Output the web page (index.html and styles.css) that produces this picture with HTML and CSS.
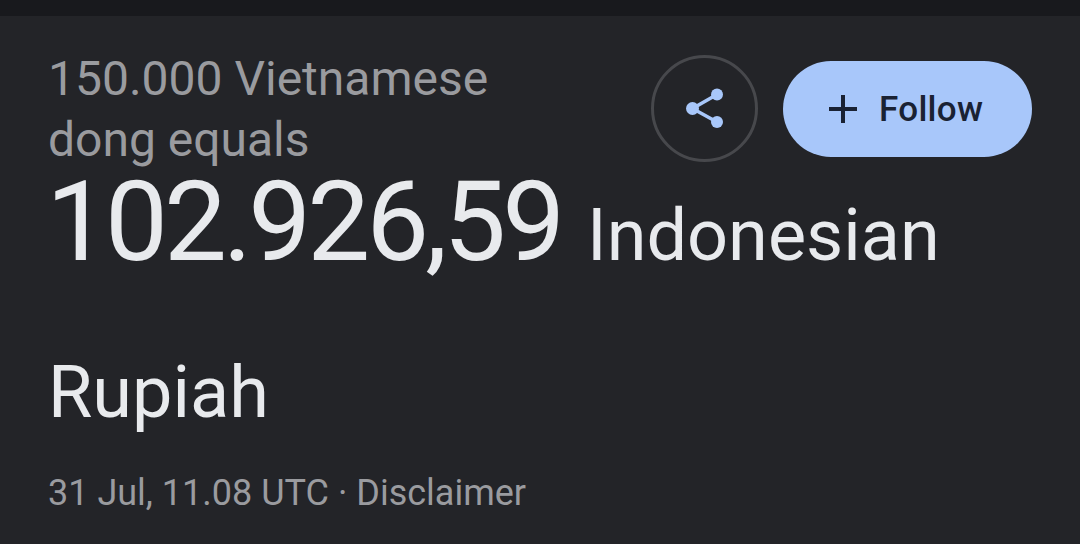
FILE: index.html
```html
<!DOCTYPE html>
<html lang="en">
<head>
    <meta charset="UTF-8">
    <title>currency</title>
    <link rel="stylesheet" href="styles.css">
</head>
<body>
    <div class="topbar"></div>
    <div class="card">
        <div class="head">
            <div class="from">150.000 Vietnamese<br>dong equals</div>
            <div class="actions">
                <div class="share">
                    <svg width="38" height="42" viewBox="0 0 38 42">
                        <path d="M31 7.5 L6.500 21.500 L31 35" fill="none" stroke="#a8c7fa" stroke-width="3.500"/>
                        <circle cx="31" cy="7.500" r="6" fill="#a8c7fa"/>
                        <circle cx="6.500" cy="21.500" r="6.500" fill="#a8c7fa"/>
                        <circle cx="31" cy="35" r="6" fill="#a8c7fa"/>
                    </svg>
                </div>
                <div class="follow">
                    <svg width="28" height="28" viewBox="0 0 28 28">
                        <path d="M14 0V28M0 14H28" stroke="#1a2233" stroke-width="4" fill="none"/>
                    </svg>
                    <span>Follow</span>
                </div>
            </div>
        </div>
        <div class="result"><span class="amount">102.926,59</span> <span class="unit">Indonesian Rupiah</span></div>
        <div class="meta">31 Jul, 11.08 UTC · Disclaimer</div>
    </div>
</body>
</html>
```
FILE: styles.css
```css
body {
    margin: 0;
    height: 544px;
    overflow: hidden;
    background-color: #232428;
    font-family: Roboto, sans-serif;
}

.topbar {
    height: 16px;
    background-color: #18191d;
}

.card {
    padding: 32px 48px 0 48px;
}

.head {
    display: flex;
    justify-content: space-between;
}

.from {
    color: #9a9b9f;
    font-size: 48px;
    line-height: 61px;
}

.actions {
    display: flex;
    align-items: center;
    gap: 25px;
    height: 108px;
    margin-top: 7px;
}

.share {
    display: flex;
    align-items: center;
    justify-content: center;
    box-sizing: border-box;
    width: 107px;
    height: 107px;
    margin-bottom: 2px;
    border: 3px solid #47484c;
    border-radius: 50%;
}

.follow {
    display: flex;
    align-items: center;
    gap: 22px;
    box-sizing: border-box;
    width: 249px;
    height: 96px;
    padding-left: 46px;
    border-radius: 48px;
    background-color: #a8c7fa;
    color: #1a2233;
    font-size: 35px;
    font-weight: 500;
    letter-spacing: 0.3px;
}

.result {
    width: 900px;
    margin-top: -17px;
    color: #e8eaed;
    line-height: 138px;
}

.amount {
    margin-left: -2px;
    font-size: 112px;
    letter-spacing: -4px;
}

.unit {
    margin-left: 22px;
    font-size: 72px;
}

.meta {
    margin-top: -9px;
    color: #9a9b9f;
    font-size: 36px;
}
```
